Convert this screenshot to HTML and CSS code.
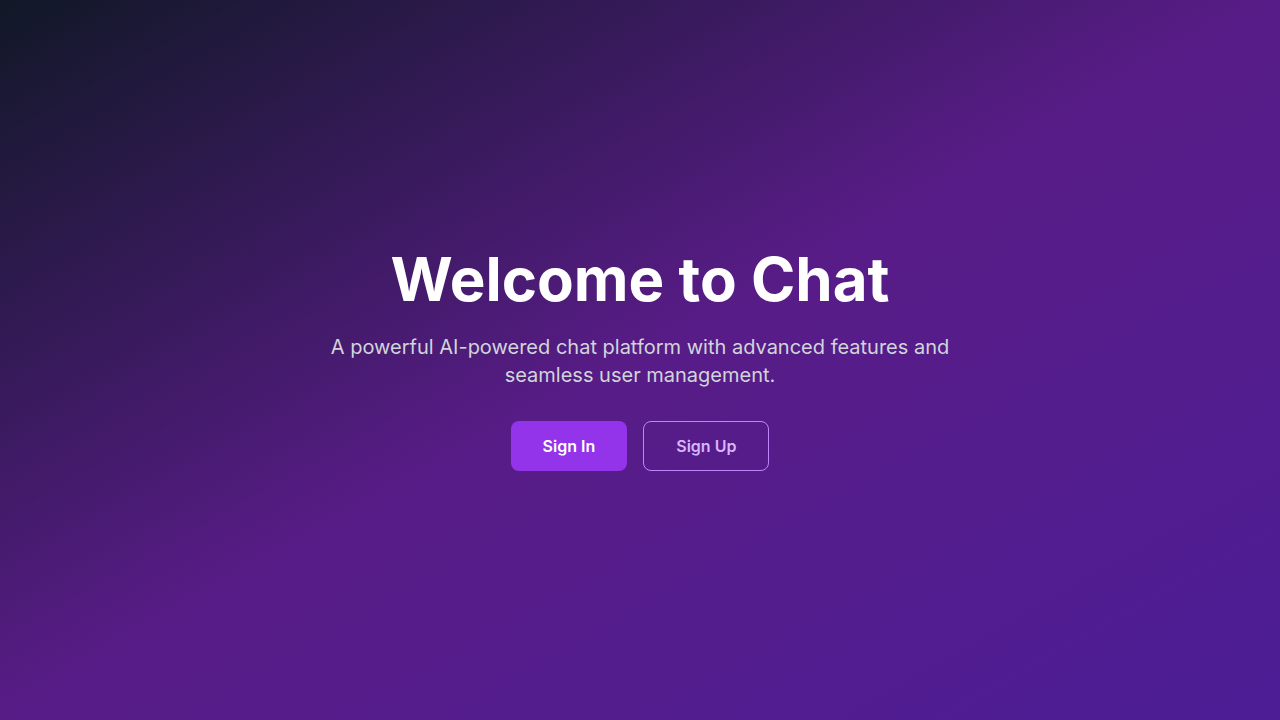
FILE: index.html
```html
<!DOCTYPE html>
<html lang="en">
<head>
<meta charset="utf-8">
<title>Welcome to Chat</title>
<link rel="stylesheet" href="styles.css">
</head>
<body>
<main class="screen">
  <section class="hero">
    <h1 class="title">Welcome to Chat</h1>
    <p class="subtitle">A powerful AI-powered chat platform with advanced features and seamless user management.</p>
    <div class="actions">
      <a class="btn btn-primary" href="#">Sign In</a>
      <a class="btn btn-outline" href="#">Sign Up</a>
    </div>
  </section>
</main>
</body>
</html>
```
FILE: styles.css
```css
* { box-sizing: border-box; }
html, body { margin: 0; padding: 0; }
body {
  font-family: Inter, "Noto Sans", sans-serif;
  -webkit-font-smoothing: antialiased;
}
.screen {
  min-height: 100vh;
  background: linear-gradient(to bottom right, #111827, #581c87, #4c1d95);
  display: flex;
  align-items: center;
  justify-content: center;
}
.hero {
  text-align: center;
  display: flex;
  flex-direction: column;
  align-items: center;
}
.title {
  margin: 0 0 24px;
  font-size: 60px;
  line-height: 1;
  font-weight: 700;
  color: #ffffff;
}
.subtitle {
  margin: 0 0 32px;
  max-width: 672px;
  font-size: 20px;
  line-height: 28px;
  color: #d1d5db;
}
.actions {
  display: flex;
  gap: 16px;
  justify-content: center;
}
.btn {
  display: inline-block;
  border-radius: 8px;
  font-size: 16px;
  line-height: 24px;
  text-decoration: none;
  font-weight: 600;
}
.btn-primary {
  padding: 13px 32px;
  background: #9333ea;
  color: #ffffff;
}
.btn-outline {
  padding: 12px 32px;
  border: 1px solid #c084fc;
  color: #d8b4fe;
}
```
